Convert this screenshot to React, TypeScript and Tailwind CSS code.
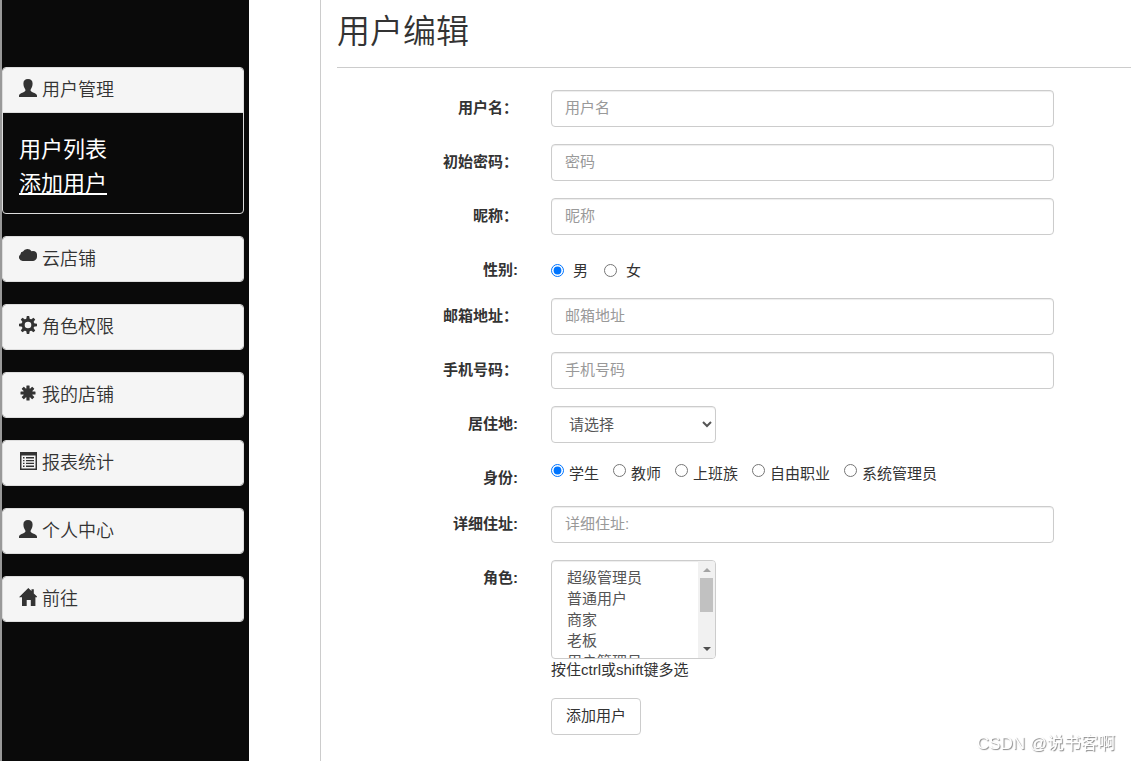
import React from "react";

type IconName = "user" | "cloud" | "cog" | "asterisk" | "list" | "home";

const Icon = ({ name }: { name: IconName }) => (
  <svg
    viewBox="0 0 18 18"
    className="mb-1 h-[18px] w-[18px] shrink-0 fill-[#333]"
    aria-hidden="true"
  >
    {name === "user" && (
      <path d="M9 0C6 0 4.400 1.600 4.400 4.600c0 2.500.8 4.400 1.800 5.700.4.600.3 1.200 0 1.700-.4.700-1.200 1-2.200 1.400C2 14.200.2 15 0 16.400V18h18v-1.600c-.2-1.400-2-2.200-4-3-1-.4-1.800-.7-2.200-1.400-.3-.5-.4-1.100 0-1.700 1-1.300 1.800-3.200 1.800-5.700C13.600 1.600 12 0 9 0z" />
    )}
    {name === "cloud" && (
      <path d="M3.700 13A3.700 3.700 0 0 1 1.400 6.400 2.900 2.900 0 0 1 4 3.600 4.900 4.900 0 0 1 12.600 3.300a4.500 4.500 0 0 1 1.500-.2A4.300 4.300 0 0 1 18 7.700 5 5 0 0 1 14.200 13z" />
    )}
    {name === "cog" && (
      <g>
        <path
          fillRule="evenodd"
          d="M9 2.600a6.400 6.400 0 1 0 0 12.800A6.400 6.400 0 1 0 9 2.600zM9 5.700a3.300 3.300 0 1 1 0 6.600 3.300 3.300 0 1 1 0-6.600z"
        />
        {[0, 45, 90, 135, 180, 225, 270, 315].map((deg) => (
          <path
            key={deg}
            d="M7.800 0h2.400l.6 3.500H7.200z"
            transform={`rotate(${deg} 9 9)`}
          />
        ))}
      </g>
    )}
    {name === "asterisk" && (
      <g>
        <circle cx="9" cy="9" r="4.700" />
        {[0, 45, 90, 135].map((deg) => (
          <rect
            key={deg}
            x="7.400"
            y="1.500"
            width="3.200"
            height="15"
            rx=".5"
            transform={`rotate(${deg} 9 9)`}
          />
        ))}
      </g>
    )}
    {name === "list" && (
      <path
        fillRule="evenodd"
        d="M1 0h17v18H1zM2.500 3.500v13h14v-13zM4 5h1.500v1.500H4zM7 5h8v1.500H7zM4 8h1.500v1.300H4zM7 8h8v1.300H7zM4 10.700h1.500V12H4zM7 10.700h8V12H7zM4 13.500h1.500V15H4zM7 13.500h8V15H7z"
      />
    )}
    {name === "home" && (
      <path d="M9.300 0l3.200 3.100V1.300h2.300v4.100L18.700 9.300h-2.300V18h-4.600v-6H7.700v6H3V9.300H0z" />
    )}
  </svg>
);

const menus: { icon: IconName; title: string; links?: string[] }[] = [
  { icon: "user", title: "用户管理", links: ["用户列表", "添加用户"] },
  { icon: "cloud", title: "云店铺" },
  { icon: "cog", title: "角色权限" },
  { icon: "asterisk", title: "我的店铺" },
  { icon: "list", title: "报表统计" },
  { icon: "user", title: "个人中心" },
  { icon: "home", title: "前往" },
];

const roles = ["超级管理员", "普通用户", "商家", "老板", "用户管理员"];

const control =
  "block rounded-[4px] border border-[#ccc] bg-white text-[15px] leading-[21px] text-[#555] shadow-[inset_0_1px_1px_rgba(0,0,0,0.075)] outline-none";

type RowProps = {
  label?: string;
  htmlFor?: string;
  children: React.ReactNode;
};

const Row = ({ label, htmlFor, children }: RowProps) => (
  <div className="mb-[17px] flex gap-[33px]">
    <div className="w-[181px] shrink-0 text-right">
      {label && (
        <label htmlFor={htmlFor} className="block pb-px pt-[7px] font-bold">
          {label}
        </label>
      )}
    </div>
    <div className="min-w-0 flex-1">{children}</div>
  </div>
);

type TextRowProps = {
  id: string;
  label: string;
  placeholder: string;
  type?: string;
};

const TextRow = ({ id, label, placeholder, type = "text" }: TextRowProps) => (
  <Row label={label} htmlFor={id}>
    <input
      id={id}
      type={type}
      placeholder={placeholder}
      className={`${control} h-[37px] w-full px-[13px] pb-0.5 placeholder:text-[#999]`}
    />
  </Row>
);

const Sidebar = () => (
  <nav className="w-[249px] shrink-0 border-l-2 border-[#999] bg-[#0a0a0a] pr-[5px] pt-[67px]">
    {menus.map(({ icon, title, links }) => (
      <div
        key={title}
        className="mb-[22px] overflow-hidden rounded-[4px] border border-[#ddd]"
      >
        <h4 className="flex h-11 items-center bg-[#f5f5f5] px-4 text-[18px] font-[350] text-[#333]">
          <a href="#" className="flex items-center gap-[5px]">
            <Icon name={icon} />
            {title}
          </a>
        </h4>
        {links && (
          <ul className="border-t border-[#ddd] px-4 pb-3 pt-5 text-[22px] leading-[34px] text-white">
            {links.map((link) => (
              <li key={link}>
                <a
                  href="#"
                  className={link === "添加用户" ? "underline" : ""}
                >
                  {link}
                </a>
              </li>
            ))}
          </ul>
        )}
      </div>
    ))}
  </nav>
);

const ScrollTrack = () => (
  <div
    aria-hidden="true"
    className="pointer-events-none absolute inset-y-px right-px flex w-[17px] flex-col items-center rounded-r-[3px] bg-[#f1f1f1]"
  >
    <svg viewBox="0 0 17 17" className="h-[17px] w-[17px] fill-[#a3a3a3]">
      <path d="M5 11l4-4 4 4z" />
    </svg>
    <div className="h-[34px] w-[13px] bg-[#c1c1c1]" />
    <svg
      viewBox="0 0 17 17"
      className="mt-auto h-[17px] w-[17px] fill-[#505050]"
    >
      <path d="M5 6l4 4 4-4z" />
    </svg>
  </div>
);

const UserForm = () => (
  <form className="mr-[77px] pt-[22px]">
    <TextRow id="username" label="用户名：" placeholder="用户名" />
    <TextRow
      id="password"
      label="初始密码："
      placeholder="密码"
      type="password"
    />
    <TextRow id="nickname" label="昵称：" placeholder="昵称" />
    <Row label="性别:" htmlFor="sex-男">
      <div className="flex gap-4 pt-2">
        {["男", "女"].map((sex, i) => (
          <label key={sex} className="flex items-center gap-[9px]">
            <input
              id={`sex-${sex}`}
              type="radio"
              name="sex"
              defaultChecked={i === 0}
              className="h-[13px] w-[13px]"
            />
            {sex}
          </label>
        ))}
      </div>
    </Row>
    <TextRow id="email" label="邮箱地址：" placeholder="邮箱地址" />
    <TextRow id="phone" label="手机号码：" placeholder="手机号码" />
    <Row label="居住地:" htmlFor="city">
      <select id="city" className={`${control} h-[37px] w-[165px] px-[13px]`}>
        <option>请选择</option>
      </select>
    </Row>
    <Row label="身份:" htmlFor="job-学生">
      <div className="flex flex-wrap gap-x-[14px] pt-[3px]">
        {["学生", "教师", "上班族", "自由职业", "系统管理员"].map((job, i) => (
          <label key={job} className="flex items-start gap-[5px]">
            <input
              id={`job-${job}`}
              type="radio"
              name="job"
              defaultChecked={i === 0}
              className="mt-px h-[13px] w-[13px]"
            />
            {job}
          </label>
        ))}
      </div>
    </Row>
    <TextRow id="address" label="详细住址:" placeholder="详细住址:" />
    <Row label="角色:" htmlFor="roles">
      <div className="relative w-[165px]">
        <select
          id="roles"
          multiple
          className={`${control} h-[99px] w-full px-[13px] py-[5px]`}
        >
          {roles.map((role) => (
            <option key={role} className="h-[21px] px-[2px] py-0">
              {role}
            </option>
          ))}
        </select>
        <ScrollTrack />
      </div>
      <p className="leading-[22px]">按住ctrl或shift键多选</p>
    </Row>
    <Row>
      <button
        type="button"
        className="h-[37px] rounded-[4px] border border-[#ccc] bg-white px-[14px] pb-0.5"
      >
        添加用户
      </button>
    </Row>
  </form>
);

const App = () => (
  <div
    lang="zh-CN"
    className="flex min-h-screen gap-[71px] overflow-hidden bg-white font-['Liberation_Sans','Noto_Sans_CJK_SC',sans-serif] text-[15px] leading-[21px] text-[#333]"
  >
    <Sidebar />
    <main className="min-w-0 flex-1 border-l border-[#ccc] pl-4">
      <h1 className="border-b border-[#ccc] pb-4 pt-3 text-[33px] font-[350] leading-[39px]">
        用户编辑
      </h1>
      <UserForm />
    </main>
    <div className="fixed bottom-[7px] right-4 text-[17px] text-white [text-shadow:1px_1px_1px_#888]">
      CSDN @说书客啊
    </div>
  </div>
);

export default App;
